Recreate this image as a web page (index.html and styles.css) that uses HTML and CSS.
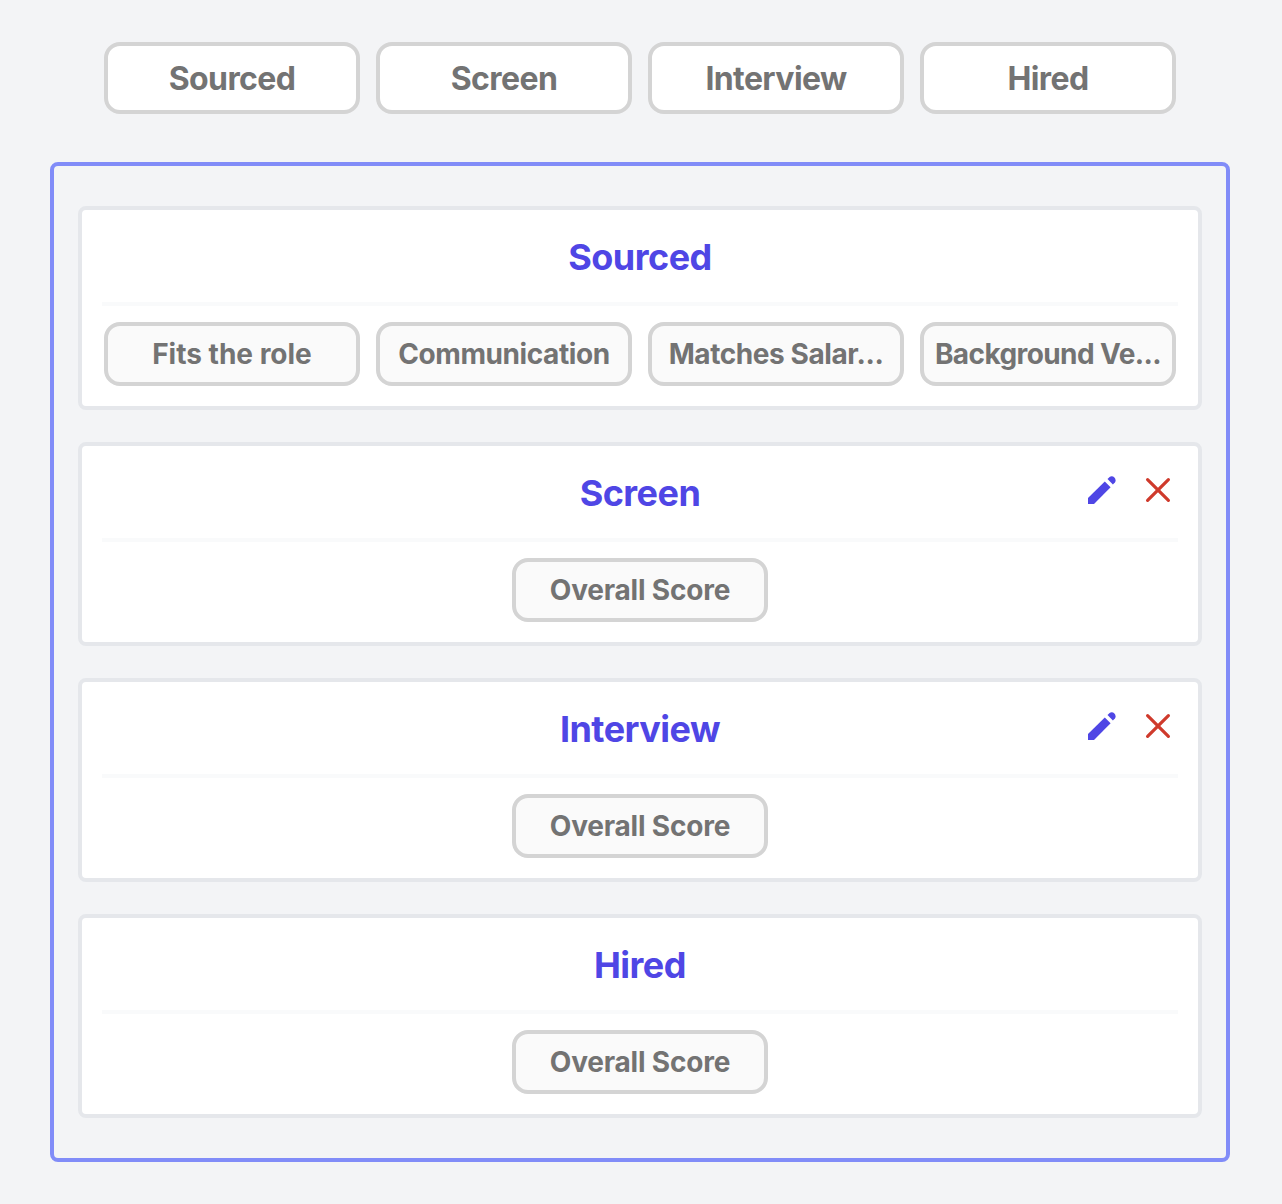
FILE: index.html
```html
<!DOCTYPE html>
<html lang="en">
<head>
<meta charset="utf-8">
<title>Hiring pipeline</title>
<link rel="stylesheet" href="styles.css">
</head>
<body>
<svg class="defs" aria-hidden="true">
  <symbol id="pencil" viewBox="0 0 28 28">
    <path d="M16.8 5.4 22.6 11.2 6 28H0V22Z"/>
    <path d="M19.5 3.1 21.6 1.1C24.8-1.5 29.4 3.3 26.9 6.4L24.9 8.5Z"/>
  </symbol>
  <symbol id="cross" viewBox="0 0 28 28">
    <path d="M3.6 3.6 24.4 24.4M24.4 3.6 3.6 24.4"/>
  </symbol>
</svg>
<nav class="stages">
  <div class="stage">Sourced</div>
  <div class="stage">Screen</div>
  <div class="stage">Interview</div>
  <div class="stage">Hired</div>
</nav>
<main class="panel">
  <section class="card">
    <header class="card-head"><h2>Sourced</h2></header>
    <div class="chips">
      <div class="chip looser">Fits the role</div>
      <div class="chip">Communication</div>
      <div class="chip">Matches Salar...</div>
      <div class="chip tight">Background Ve...</div>
    </div>
  </section>
  <section class="card">
    <header class="card-head">
      <h2>Screen</h2>
      <div class="actions">
        <svg class="icon edit"><use href="#pencil"/></svg>
        <svg class="icon remove"><use href="#cross"/></svg>
      </div>
    </header>
    <div class="chips"><div class="chip loose">Overall Score</div></div>
  </section>
  <section class="card">
    <header class="card-head">
      <h2>Interview</h2>
      <div class="actions">
        <svg class="icon edit"><use href="#pencil"/></svg>
        <svg class="icon remove"><use href="#cross"/></svg>
      </div>
    </header>
    <div class="chips"><div class="chip loose">Overall Score</div></div>
  </section>
  <section class="card">
    <header class="card-head"><h2>Hired</h2></header>
    <div class="chips"><div class="chip loose">Overall Score</div></div>
  </section>
</main>
</body>
</html>
```

FILE: styles.css
```css
* { box-sizing: border-box; }
body {
  margin: 0;
  padding: 42px 52px 42px 50px;
  background: #f3f4f6;
  font-family: Inter, "Liberation Sans", sans-serif;
  color: #737373;
}
.defs { display: none; }
.stages, .chips {
  display: flex;
  justify-content: center;
  gap: 16px;
}
.stages { margin-bottom: 48px; }
.stage, .chip {
  display: flex;
  align-items: center;
  justify-content: center;
  width: 256px;
  border: 4px solid #d4d4d4;
  border-radius: 16px;
  font-weight: 700;
  white-space: nowrap;
}
.stage { height: 72px; padding-top: 1px; background: #fff; font-size: 32px; letter-spacing: -0.6px; }
.chip { height: 64px; background: #fafafa; font-size: 28px; letter-spacing: -0.42px; }
.chip.loose { letter-spacing: -0.2px; }
.chip.looser { letter-spacing: 0; }
.chip.tight { letter-spacing: -0.58px; }
.panel {
  display: flex;
  flex-direction: column;
  gap: 32px;
  padding: 40px 24px;
  border: 4px solid #818cf8;
  border-radius: 8px;
}
.card {
  height: 204px;
  padding: 0 20px 20px;
  background: #fff;
  border: 4px solid #e5e7eb;
  border-radius: 8px;
}
.card-head {
  display: grid;
  grid-template-columns: 1fr auto 1fr;
  align-items: center;
  height: 96px;
  margin-bottom: 16px;
  border-bottom: 4px solid #f9fafb;
}
.card-head h2 {
  grid-column: 2;
  margin: 2px 0 0;
  color: #4f46e5;
  font-size: 36px;
  line-height: 40px;
  font-weight: 700;
  letter-spacing: -0.52px;
}
.actions {
  display: flex;
  justify-self: end;
  gap: 28px;
  margin: 0 6px 4px 0;
}
.icon { display: block; width: 28px; height: 28px; overflow: visible; }
.edit { fill: #4f46e5; }
.remove { fill: none; stroke: #cf3a2c; stroke-width: 3.2; stroke-linecap: round; }
```
